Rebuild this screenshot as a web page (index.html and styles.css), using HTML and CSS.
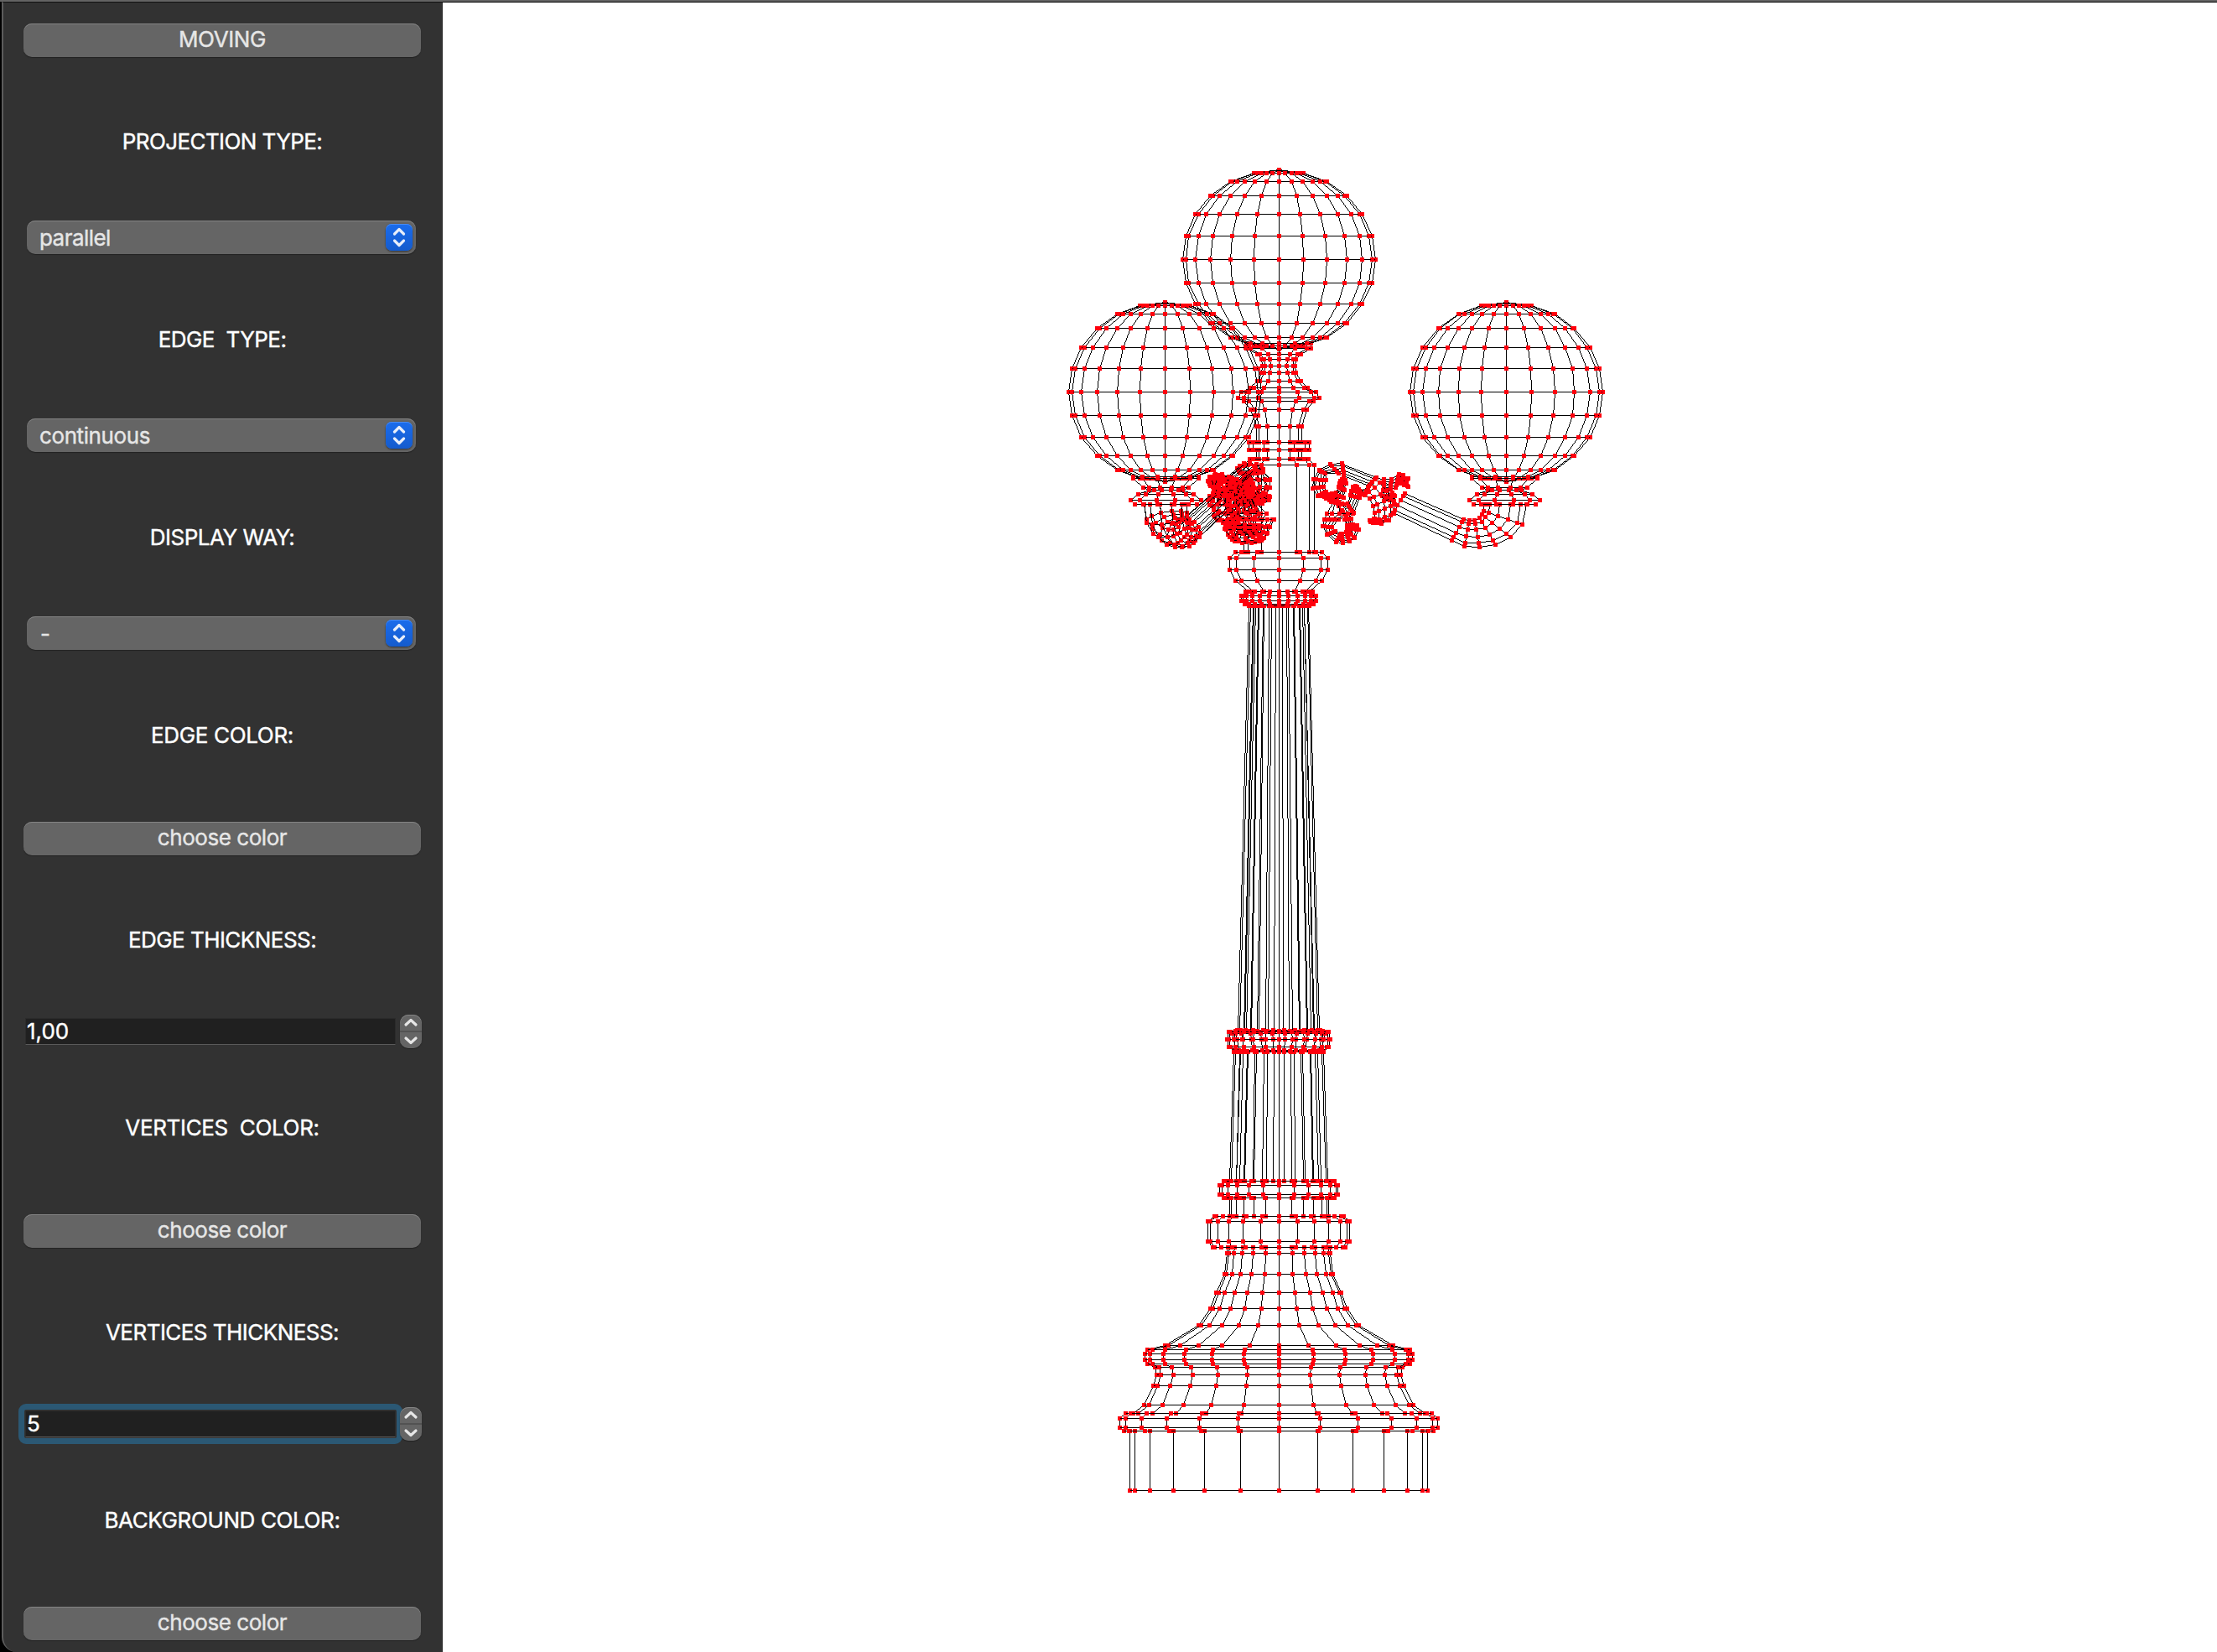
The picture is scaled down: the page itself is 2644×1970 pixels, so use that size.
FILE: index.html
```html
<!DOCTYPE html>
<html lang="en">
<head>
<meta charset="utf-8">
<title>3D Viewer</title>
<link rel="stylesheet" href="styles.css">
</head>
<body>
<main class="window">
  <aside class="panel">
    <button class="button"><span class="w-moving">MOVING</span></button>
    <div class="label first"><span class="w-projection">PROJECTION TYPE:</span></div>
    <div class="combo"><span class="w-parallel">parallel</span><i class="arrows"><svg viewBox="0 0 32 32"><path d="M10.500 12l5.500-5.500 5.500 5.500M10.500 20l5.500 5.500 5.500-5.500"/></svg></i></div>
    <div class="label low"><span class="w-edge-type">EDGE&nbsp; TYPE:</span></div>
    <div class="combo"><span class="w-continuous">continuous</span><i class="arrows"><svg viewBox="0 0 32 32"><path d="M10.500 12l5.500-5.500 5.500 5.500M10.500 20l5.500 5.500 5.500-5.500"/></svg></i></div>
    <div class="label low"><span class="w-display">DISPLAY WAY:</span></div>
    <div class="combo"><span>-</span><i class="arrows"><svg viewBox="0 0 32 32"><path d="M10.500 12l5.500-5.500 5.500 5.500M10.500 20l5.500 5.500 5.500-5.500"/></svg></i></div>
    <div class="label tall"><span class="w-edge-color">EDGE COLOR:</span></div>
    <button class="button"><span class="w-choose">choose color</span></button>
    <div class="label short"><span class="w-edge-thick">EDGE THICKNESS:</span></div>
    <div class="spin"><div class="field"><span class="w-number">1,00</span></div><i class="stepper"><svg viewBox="0 0 26 40"><path d="M7 12l6-5.500 6 5.500M7 28l6 5.500 6-5.500"/></svg></i></div>
    <div class="label after"><span class="w-vert-color">VERTICES&nbsp; COLOR:</span></div>
    <button class="button"><span class="w-choose">choose color</span></button>
    <div class="label short"><span class="w-vert-thick">VERTICES THICKNESS:</span></div>
    <div class="spin focus"><div class="field"><span>5</span></div><i class="stepper"><svg viewBox="0 0 26 40"><path d="M7 12l6-5.500 6 5.500M7 28l6 5.500 6-5.500"/></svg></i></div>
    <div class="label after"><span class="w-back">BACKGROUND COLOR:</span></div>
    <button class="button"><span class="w-choose">choose color</span></button>
  </aside>
  <canvas class="view" id="view" width="2116" height="1967"></canvas>
</main>
<script src="model.js"></script>
</body>
</html>
```

FILE: styles.css
```css
* { box-sizing: border-box; }
body { margin: 0; background: #000; overflow: hidden; }
.window {
  display: flex;
  width: 2644px;
  height: 1970px;
  border-top: 2px solid #646464;
  font: 26px/40px Inter, "Liberation Sans", sans-serif;
  -webkit-text-stroke: 0.4px currentColor;
}
.panel {
  display: flex;
  flex-direction: column;
  width: 526px;
  margin-left: 2px;
  height: 1968px;
  padding: 25px 26px 0 24px;
  background: #323232;
  border-top: 1px solid #111;
  border-left: 2px solid #5c5c5c;
  border-bottom-left-radius: 18px;
}
.view { display: block; width: 2116px; height: 1967px; margin-top: 1px; background: #fff; }
.button {
  display: block;
  flex: none;
  height: 40px;
  margin: 0;
  padding: 0 0 3px;
  border: 0;
  border-radius: 10px;
  background: #656565;
  box-shadow: inset 0 1px #848484, 0 1px 1px #222;
  color: #e6e6e6;
  font: inherit;
  line-height: 37px;
  text-align: center;
  -webkit-text-stroke: inherit;
}
.label {
  flex: none;
  height: 195px;
  padding-top: 80px;
  color: #fff;
  text-align: center;
  white-space: nowrap;
}
.first { padding-top: 81px; }
.low { height: 196px; padding-top: 82px; }
.tall { height: 205px; padding-top: 82px; }
.short { height: 190px; padding-top: 81px; }
.after { height: 198px; padding-top: 75px; }
.w-moving { letter-spacing: -0.4px; }
.w-projection { letter-spacing: -0.6px; }
.w-edge-type { letter-spacing: -0.55px; }
.w-display { letter-spacing: -0.5px; }
.w-edge-color { letter-spacing: -0.35px; }
.w-back { letter-spacing: -0.38px; }
.w-choose { letter-spacing: -0.45px; }
.w-edge-thick, .w-vert-thick { letter-spacing: -0.54px; }
.w-vert-color { letter-spacing: -0.35px; }
.w-parallel { letter-spacing: -0.55px; margin-left: -1px; }
.w-continuous { letter-spacing: -0.4px; margin-left: -1px; }
.w-number { letter-spacing: 0; }
.combo {
  display: flex;
  flex: none;
  justify-content: space-between;
  align-items: center;
  width: 464px;
  height: 40px;
  margin-left: 4px;
  padding: 0 4px 0 16px;
  border-radius: 10px;
  background: #656565;
  box-shadow: inset 0 1px #848484, 0 1px 1px #222;
  color: #e6e6e6;
}
.combo span { padding-top: 2px; }
.arrows {
  display: block;
  width: 32px;
  height: 32px;
  border-radius: 7px;
  background: linear-gradient(#1b6cec, #145bcd);
  box-shadow: inset 0 1px #4a8bf0, 0 1px 2px #333;
}
svg { display: block; width: 100%; height: 100%; fill: none; stroke: #e8eefa; stroke-width: 3.2; stroke-linecap: round; stroke-linejoin: round; }
.spin { display: flex; flex: none; align-items: center; justify-content: space-between; height: 40px; padding-left: 2px; margin-right: -1px; }
.field {
  width: 442px;
  height: 32px;
  padding-left: 1px;
  border: 1px solid #2b2b2b;
  border-bottom: 1px solid #5a5a5a;
  background: #202020;
  color: #fff;
  line-height: 29px;
}
.focus .field { outline: 7px solid rgba(36, 125, 181, 0.5); outline-offset: 1px; border-radius: 1px; }
.stepper {
  display: block;
  width: 26px;
  height: 40px;
  border-radius: 10px;
  background: linear-gradient(#656565 19px, #525252 19px, #525252 21px, #656565 21px);
  box-shadow: inset 0 1px #848484, 0 1px 1px #222;
}
.stepper svg { stroke: #e6e6e6; }
```

FILE: model.js
```js
// Wireframe model: orthographic view with a depth buffer.
const canvas = document.getElementById('view');
const ctx = canvas.getContext('2d');
const W = canvas.width, H = canvas.height;
const OX = 528, OY = 3;          // canvas origin inside the window
const AXIS = 1525.2;             // x of the post
const depth = new Float32Array(W * H).fill(-1e9);
const image = ctx.createImageData(W, H);
image.data.fill(255);
const edges = [], points = [];

function plot(x, y, z, r) {
  if (x < 0 || y < 0 || x >= W || y >= H) return;
  const i = y * W + x;
  if (z < depth[i]) return;
  depth[i] = z;
  image.data[i * 4] = r;
  image.data[i * 4 + 1] = 0;
  image.data[i * 4 + 2] = r ? 13 : 0;
}
function edge(a, b) { edges.push([a, b]); }

// Joins consecutive rings of vertices into a mesh.
function mesh(rings) {
  rings.forEach((ring, i) => ring.forEach((p, k) => {
    points.push(p);
    edge(p, ring[(k + 1) % ring.length]);
    if (i) edge(p, rings[i - 1][k]);
  }));
}
// Surface of revolution; profile is a list of [y, radius].
function lathe(cx, cz, profile, n, phase = 0, inner = 1) {
  mesh(profile.map(([y, r]) => Array.from({ length: n }, (_, k) => {
    const a = (k / n + phase / 360) * 2 * Math.PI, q = k % 2 ? r * inner : r;
    return [cx + q * Math.sin(a), y, cz + q * Math.cos(a)];
  })));
}
function globe(cx, cy, cz) {
  const p = [];
  for (let i = 0; i <= 12; i++) {
    const a = i * Math.PI / 12;
    p.push([cy - 107 * Math.cos(a), 115 * Math.sin(a)]);
  }
  lathe(cx, cz, p, 24);
}
const turn = (p, a) => {
  const c = Math.cos(a), s = Math.sin(a);
  return [p[0] * c + p[2] * s, p[1], -p[0] * s + p[2] * c];
};
// Tube through cross-sections given by opposite ends, in the plane of an arm.
function tube(sections, n, a, wide = 1, phase = 0.5) {
  mesh(sections.map(([x1, y1, x2, y2]) => Array.from({ length: n }, (_, k) => {
    const t = (k + phase) / n * 2 * Math.PI, c = (1 - Math.cos(t)) / 2;
    const half = Math.hypot(x2 - x1, y2 - y1) / 2 * wide;
    const q = turn([x1 + (x2 - x1) * c, y1 + (y2 - y1) * c, half * Math.sin(t)], a);
    return [q[0] + AXIS, q[1], q[2]];
  })));
}
const near = s => s.map(([a, b, c, d]) => [(a - 316) / 3, 530 + b / 3, (c - 316) / 3, 530 + d / 3]);
const far = s => s.map(([a, b, c, d]) => [a / 3 + 115, 340 + b / 3, c / 3 + 115, 340 + d / 3]);

const elbow = far([
  [385, 784, 544, 784], [385, 808, 528, 857], [379, 818, 486, 902], [372, 832, 431, 929],
  [355, 839, 373, 938], [337, 840, 319, 935], [317, 837, 273, 914], [108, 744, 62, 815]
]);
// Each ornament: [depth factor, vertices per ring, sections].
const scrolls = [
  [1.5, 10, [[665, 118, 637, 149], [543, 68, 548, 114]]],
  [2.1, 10, [[543, 68, 548, 104], [500, 70, 530, 105], [460, 92, 482, 104],
   [440, 125, 487, 127], [436, 157, 478, 150], [455, 184, 485, 168], [490, 192, 505, 178],
   [515, 190, 520, 172], [545, 165, 530, 150], [556, 140, 532, 140], [553, 128, 535, 130], [543, 123, 538, 135]]],
  [3, 10, [[535, 150, 550, 165], [515, 180, 550, 190], [485, 192, 530, 205], [510, 205, 545, 215]]],
  [1.5, 10, [[510, 205, 550, 215], [485, 248, 583, 246], [478, 268, 530, 268]]],
  [3.4, 10, [[478, 268, 530, 268],
   [472, 292, 508, 297], [486, 323, 520, 310], [520, 351, 538, 320], [544, 354, 542, 318],
   [568, 348, 556, 314], [587, 336, 565, 308], [602, 305, 560, 300], [598, 288, 558, 290], [580, 285, 560, 294], [575, 265, 550, 270]]],
  [2.6, 10, [[540, 235, 560, 265], [562, 212, 583, 246], [572, 182, 605, 190], [575, 165, 602, 170], [580, 150, 608, 180], [590, 148, 612, 170], [622, 182, 637, 148]]],
  [1.3, 10, [[637, 148, 665, 118], [622, 182, 693, 125], [640, 195, 718, 160], [652, 222, 732, 185], [658, 245, 730, 215],
   [660, 272, 729, 248], [650, 270, 712, 272], [643, 278, 685, 283], [640, 272, 672, 278], [655, 265, 670, 270]]],
  [1.9, 10, [[693, 125, 690, 165], [718, 125, 716, 160], [745, 106, 735, 155], [762, 110, 750, 140], [779, 120, 765, 145], [780, 152, 765, 135], [768, 120, 755, 125]]],
  [1.6, 8, [[700, 165, 715, 160], [685, 185, 715, 200], [700, 185, 728, 180], [720, 170, 732, 215]]],
  [2.6, 10, [[460, 180, 500, 197], [478, 180, 502, 205], [490, 178, 512, 206], [505, 175, 528, 205], [515, 185, 530, 220]]]
].map(([wide, n, s]) => [wide, n, near(s)]);

for (const a of [0, 2 * Math.PI / 3, -2 * Math.PI / 3]) {
  const d = turn([271.3, 0, 0], a), e = turn([269, 0, 0], a);
  globe(AXIS + d[0], 467.5, d[2]);
  lathe(AXIS + e[0], e[2], [[568.3, 40.5], [570.6, 40.5], [581.3, 28], [584.3, 20.5], [589.3, 34], [596.3, 43.5], [601.3, 38.5], [601.3, 27.4]], 12, 15);
  tube(elbow, 12, a);
  for (const [wide, n, s] of scrolls) tube(s, n, a, wide);
}

globe(AXIS, 309.4, 0);
lathe(AXIS, 0, [
  [409.7, 38.5], [415.3, 38.5], [422.3, 26], [428.3, 20.5], [436.3, 19.5], [444.3, 20.5], [454.3, 26],
  [462.3, 34.5], [467.3, 44.5], [474.3, 48.5], [478.3, 41.5], [488.3, 33.5], [508.3, 27], [527.3, 27],
  [527.3, 36], [536.3, 36], [536.3, 27], [547.3, 27], [547.3, 35], [554.3, 42], [658.3, 42], [658.3, 51.5],
  [665.3, 58.5], [679.3, 58.5], [692.3, 51.5], [705.3, 36]
], 12);
lathe(AXIS, 0, [[705.3, 40], [710.3, 44.5], [716.3, 44.5], [720.3, 41], [722.3, 36]], 24);
lathe(AXIS, 0, [[722.3, 35.4], [1230.3, 48.3]], 48, 0, 0.86);
lathe(AXIS, 0, [[1229.3, 52], [1230.5, 59.5], [1239.3, 61.5], [1248.3, 59.5], [1253.5, 53]], 24);
lathe(AXIS, 0, [[1228.3, 50], [1232.3, 56], [1239.3, 54], [1252.3, 52]], 24, 7.5);
lathe(AXIS, 0, [[1254.3, 53.5], [1408.3, 58.5]], 48, 0, 0.87);
lathe(AXIS, 0, [
  [1408.3, 66], [1413.3, 70.5], [1424.3, 70.5], [1428.3, 66], [1428.3, 59], [1450.3, 59], [1450.3, 77],
  [1456.3, 84.5], [1480.3, 84.5], [1487.3, 79], [1487.3, 61], [1494.3, 61.5], [1519.3, 64.5], [1541.3, 74.5],
  [1560.3, 81.5], [1580.3, 95.5], [1604.3, 136], [1609.3, 156.5], [1614.3, 159.5], [1621.3, 159.5], [1626.3, 156.5],
  [1630.3, 147.5], [1639.3, 145.5], [1652.3, 149.5], [1675.3, 160.5], [1685.3, 174], [1685.3, 182.5], [1691.3, 189.5],
  [1702.3, 189.5], [1706.3, 184.5], [1706.3, 177.5], [1777.3, 177.5]
], 24);

for (const [a, b] of edges) {
  const x0 = Math.floor(a[0]) - OX, y0 = Math.floor(a[1]) - OY;
  const x1 = Math.floor(b[0]) - OX, y1 = Math.floor(b[1]) - OY;
  const n = Math.max(Math.abs(x1 - x0), Math.abs(y1 - y0), 1);
  for (let i = 0; i <= n; i++) {
    const t = i / n;
    plot(Math.round(x0 + (x1 - x0) * t), Math.round(y0 + (y1 - y0) * t), a[2] + (b[2] - a[2]) * t, 0);
  }
}
// Vertices sit slightly in front of the edges that meet in them.
for (const p of points) {
  const x = Math.floor(p[0]) - OX, y = Math.floor(p[1]) - OY;
  for (let i = -2; i <= 2; i++) for (let j = -2; j <= 2; j++) plot(x + i, y + j, p[2] + 3.5, 255);
}
ctx.putImageData(image, 0, 0);
```
